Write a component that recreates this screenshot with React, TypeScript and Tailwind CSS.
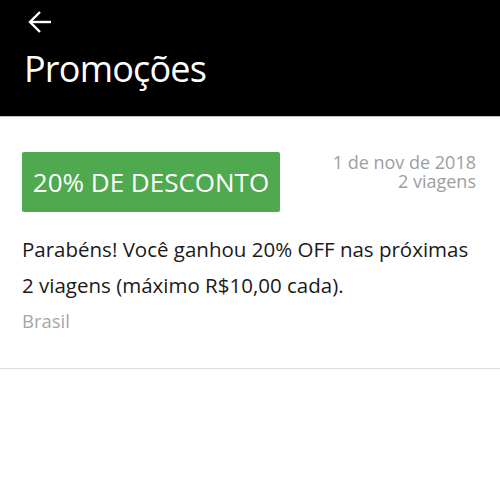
export default function App() {
  return (
    <div className="w-[500px] h-[486px] bg-white" style={{ fontFamily: '"Open Sans", "Noto Sans", sans-serif' }}>
      <div className="bg-black h-[116px] pl-6 pt-[10px]">
        <svg width="24" height="24" viewBox="0 0 24 24" className="ml-[4px]" fill="none" stroke="white" strokeWidth="2.4" strokeLinecap="butt">
          <path d="M23 12H3" />
          <path d="M12 2L2 12l10 10" />
        </svg>
        <div className="text-white text-[36px] leading-none mt-[17px] tracking-[-0.8px]">Promoções</div>
      </div>
      <div className="h-px bg-[#bdbdbd]" />
      <div className="px-[22px] pt-[35px] pb-[35px] border-b border-[#dddddd]">
        <div className="flex justify-between items-start">
          <div className="bg-[#4ea94f] rounded-[2px] w-[258px] h-[60px] flex items-center justify-center text-white text-[26px]">
            20% DE DESCONTO
          </div>
          <div className="text-right text-[#9e9e9e] text-[18px] leading-[19px] pt-[1px] pr-[2px]">
            <div>1 de nov de 2018</div>
            <div>2 viagens</div>
          </div>
        </div>
        <div className="mt-[19px] text-[#1a1a1a] text-[20.5px] leading-[36px]">
          Parabéns! Você ganhou 20% OFF nas próximas 2 viagens (máximo R$10,00 cada).
        </div>
        <div className="text-[#a6a6a6] text-[18.5px] leading-[24px] mt-[6px]">Brasil</div>
      </div>
    </div>
  );
}
